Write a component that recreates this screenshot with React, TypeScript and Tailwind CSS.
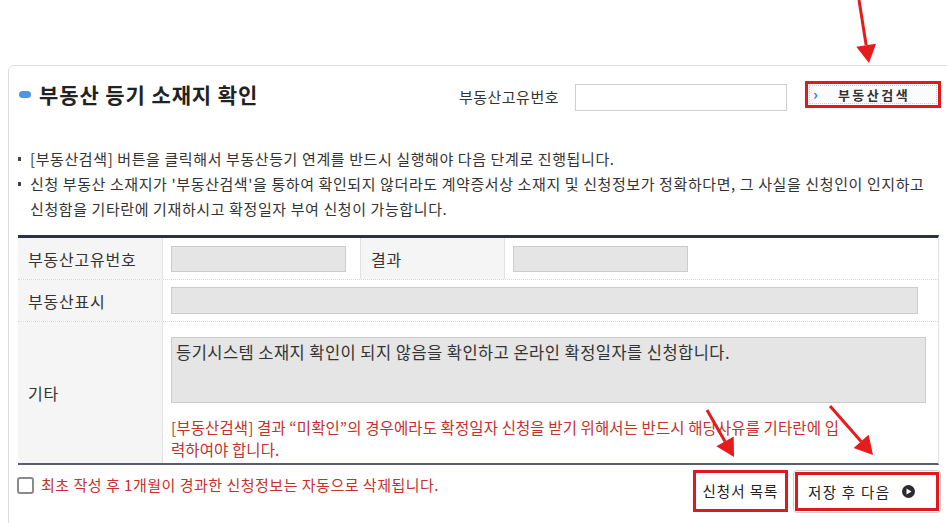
import React from "react";

const FONT = { fontFamily: '"Noto Sans CJK KR", "Noto Sans", sans-serif' };

function Arrow({ x1, y1, x2, y2 }: { x1: number; y1: number; x2: number; y2: number }) {
  const dx = x2 - x1;
  const dy = y2 - y1;
  const len = Math.sqrt(dx * dx + dy * dy);
  const ux = dx / len;
  const uy = dy / len;
  const hl = 18;
  const hw = 10;
  const bx = x2 - ux * hl;
  const by = y2 - uy * hl;
  const px = -uy;
  const py = ux;
  return (
    <g>
      <line x1={x1} y1={y1} x2={bx} y2={by} stroke="#e41c1c" strokeWidth={3} />
      <polygon
        points={`${x2},${y2} ${bx + px * hw},${by + py * hw} ${bx - px * hw},${by - py * hw}`}
        fill="#e41c1c"
      />
    </g>
  );
}

function Bullet() {
  return (
    <span className="w-[12px] shrink-0 flex items-center h-[25px]">
      <span className="w-[3px] h-[4px] bg-[#444]" />
    </span>
  );
}

export default function App() {
  return (
    <div className="relative w-[947px] h-[523px] overflow-hidden bg-white text-[#333]" style={FONT}>
      <div className="mt-[65px] ml-[8px] w-[945px] h-[470px] border border-[#dcdcdc] rounded-tl-[6px]">
        {/* header */}
        <div className="flex items-center h-[56px] pl-[10px] pr-[11px]">
          <span className="w-[12px] h-[7px] rounded-full bg-[#4f95e0] mr-[8px]" />
          <h1 className="text-[21px] font-bold tracking-[0.9px] text-[#222] leading-none">부동산 등기 소재지 확인</h1>
          <div className="ml-auto flex items-center">
            <span className="text-[15px] tracking-[0.5px] mt-[7px] text-[#333]">부동산고유번호</span>
            <div className="ml-[16px] mt-[7px] w-[212px] h-[27px] border border-[#cfcfcf] bg-white" />
            <div className="ml-[18px] w-[136px] h-[27px] border-[3px] border-[#e0191e] p-[1px] flex">
              <div className="flex-1 flex items-center border border-dotted border-[#c8c8d8] bg-[#fbfbfd] pl-[3px]">
                <span className="text-[#2f7fd8] text-[15px] font-bold leading-none -mt-[2px]">›</span>
                <span className="ml-[20px] text-[13px] tracking-[2.5px] font-bold text-[#333] leading-none">부동산검색</span>
              </div>
            </div>
          </div>
        </div>

        {/* bullets */}
        <div className="mt-[24px] pl-[9px] text-[15px] tracking-[0.6px] leading-[25px] text-[#333]">
          <div className="flex">
            <Bullet />
            <span className="whitespace-nowrap">[부동산검색] 버튼을 클릭해서 부동산등기 연계를 반드시 실행해야 다음 단계로 진행됩니다.</span>
          </div>
          <div className="flex">
            <Bullet />
            <span className="whitespace-nowrap">
              신청 부동산 소재지가 '부동산검색'을 통하여 확인되지 않더라도 계약증서상 소재지 및 신청정보가 정확하다면, 그 사실을 신청인이 인지하고
            </span>
          </div>
          <div className="pl-[12px] whitespace-nowrap">신청함을 기타란에 기재하시고 확정일자 부여 신청이 가능합니다.</div>
        </div>

        {/* table */}
        <div className="mt-[14px] ml-[9px] w-[921px] border-t-[3px] border-[#2e3146] border-r border-r-[#e2e2e2] border-b-2 border-b-[#5a5d6e]">
          <div className="grid grid-cols-[145px_197px_145px_1fr] h-[42px] border-b border-dotted border-[#d6d6d6]">
            <div className="bg-[#f5f5f5] border-r border-[#e2e2e2] flex items-center pl-[10px] text-[16px] tracking-[0.8px]">부동산고유번호</div>
            <div className="flex items-center pl-[8px]">
              <div className="w-[175px] h-[26px] bg-[#e5e5e5] border border-[#cccccc]" />
            </div>
            <div className="bg-[#f5f5f5] border-l border-r border-[#e2e2e2] flex items-center pl-[10px] text-[16px] tracking-[0.8px]">결과</div>
            <div className="flex items-center pl-[8px]">
              <div className="w-[175px] h-[26px] bg-[#e5e5e5] border border-[#cccccc]" />
            </div>
          </div>
          <div className="grid grid-cols-[145px_1fr] h-[42px] border-b border-dotted border-[#d6d6d6]">
            <div className="bg-[#f5f5f5] border-r border-[#e2e2e2] flex items-center pl-[10px] text-[16px] tracking-[0.8px]">부동산표시</div>
            <div className="flex items-center pl-[8px] pr-[20px]">
              <div className="w-full h-[27px] bg-[#e5e5e5] border border-[#cccccc]" />
            </div>
          </div>
          <div className="grid grid-cols-[145px_1fr] h-[141px]">
            <div className="bg-[#f5f5f5] border-r border-[#e2e2e2] flex items-center pl-[10px] text-[16px] tracking-[0.8px]">기타</div>
            <div className="pl-[8px] pr-[12px] pt-[15px]">
              <div className="h-[66px] bg-[#e5e5e5] border border-[#cccccc] px-[4px] pt-[3px] text-[16.5px] tracking-[0.45px] text-[#333] leading-[22px] whitespace-nowrap">
                등기시스템 소재지 확인이 되지 않음을 확인하고 온라인 확정일자를 신청합니다.
              </div>
              <div className="mt-[13px] text-[15.5px] tracking-[0.1px] leading-[22px] text-[#c5302c] whitespace-nowrap">
                [부동산검색] 결과 “미확인”의 경우에라도 확정일자 신청을 받기 위해서는 반드시 해당사유를 기타란에 입
                <br />
                력하여야 합니다.
              </div>
            </div>
          </div>
        </div>

        {/* bottom */}
        <div className="flex items-start">
          <div className="flex items-center mt-[9px] ml-[8px]">
            <span className="w-[17px] h-[17px] border-2 border-[#8a8a8a] rounded-[3px] bg-white" />
            <span className="ml-[7px] text-[15px] tracking-[0.5px] text-[#c5302c] whitespace-nowrap">
              최초 작성 후 1개월이 경과한 신청정보는 자동으로 삭제됩니다.
            </span>
          </div>
          <div className="ml-auto mr-[11px] mt-[5px] flex items-start">
            <div className="w-[95px] h-[42px] border-[3px] border-[#e0191e] flex items-center justify-center text-[14.5px] text-[#222] tracking-[1px]">
              신청서 목록
            </div>
            <div className="ml-[5px] w-[148px] h-[43px] border border-[#cfcfcf] rounded-[4px] p-[1px] flex">
              <div className="flex-1 border-[3px] border-[#e0191e] flex items-center pl-[10px] text-[14.5px] text-[#222] tracking-[1.3px]">
                저장 후 다음
                <span className="ml-[12px] w-[13px] h-[13px] rounded-full bg-[#2b2b33] flex items-center justify-center">
                  <svg width="6" height="7" viewBox="0 0 6 7">
                    <polygon points="0.5,0.5 5.5,3.5 0.5,6.5" fill="#fff" />
                  </svg>
                </span>
              </div>
            </div>
          </div>
        </div>
      </div>

      {/* red arrow annotations */}
      <svg className="absolute inset-0 pointer-events-none" width="947" height="523">
        <Arrow x1={859} y1={0} x2={869} y2={63} />
        <Arrow x1={707} y1={410} x2={734} y2={457} />
        <Arrow x1={830} y1={406} x2={873} y2={455} />
      </svg>
    </div>
  );
}
